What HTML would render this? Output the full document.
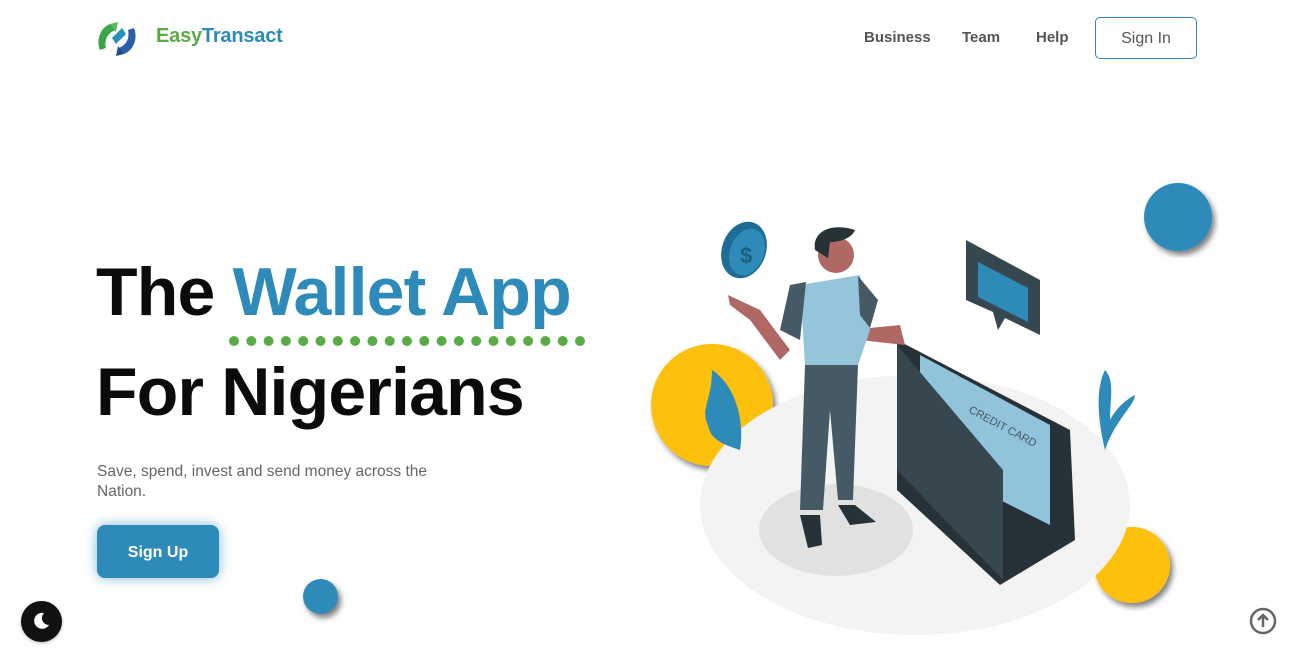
<!DOCTYPE html>
<html><head><meta charset="utf-8"><style>
*{margin:0;padding:0;box-sizing:border-box}
body{width:1301px;height:667px;overflow:hidden;background:#fff;font-family:"Liberation Sans",sans-serif;position:relative}
.abs{position:absolute}
.nav a{position:absolute;top:29px;font-size:15px;font-weight:bold;color:#555;text-decoration:none}
h1{position:absolute;left:96px;font-size:68px;font-weight:bold;color:#0b0b0b;letter-spacing:-0.8px;white-space:nowrap}
</style></head><body>
<svg class="abs" style="left:96px;top:20px" width="42" height="38" viewBox="0 0 42 38">
<path d="M4 30 C0 20 4 8 14 4 L20 10 C12 12 8 20 10 28 Z" fill="#3aa648"/>
<path d="M14 4 L22 2 L20 12 Z" fill="#5cb85c"/>
<path d="M38 8 C42 18 38 30 28 34 L22 28 C30 26 34 18 32 10 Z" fill="#2b5fa8"/>
<path d="M28 34 L20 36 L22 26 Z" fill="#1f4d94"/>
<path d="M16 18 L26 8 L30 14 L20 24 Z" fill="#2b8fbf"/>
</svg>
<div class="abs" style="left:156px;top:25px;font-size:20px;font-weight:bold;letter-spacing:-0.2px"><span style="color:#5aab46">Easy</span><span style="color:#2e8ab8">Transact</span></div>
<div class="nav"><a style="left:864px">Business</a><a style="left:962px">Team</a><a style="left:1036px">Help</a></div>
<div class="abs" style="left:1095px;top:17px;width:102px;height:42px;border:1px solid #2e8ab8;border-radius:5px;text-align:center;line-height:42px;font-size:16px;color:#555">Sign In</div>

<h1 style="top:253px">The <span style="color:#2e8ab8">Wallet App</span></h1>
<svg class="abs" style="left:226px;top:334px" width="365" height="14">
<g fill="#5aab46">
<circle cx="8" cy="7" r="5"/><circle cx="25.3" cy="7" r="5"/><circle cx="42.6" cy="7" r="5"/><circle cx="59.9" cy="7" r="5"/><circle cx="77.2" cy="7" r="5"/><circle cx="94.5" cy="7" r="5"/><circle cx="111.8" cy="7" r="5"/><circle cx="129.1" cy="7" r="5"/><circle cx="146.4" cy="7" r="5"/><circle cx="163.7" cy="7" r="5"/><circle cx="181" cy="7" r="5"/><circle cx="198.3" cy="7" r="5"/><circle cx="215.6" cy="7" r="5"/><circle cx="232.9" cy="7" r="5"/><circle cx="250.2" cy="7" r="5"/><circle cx="267.5" cy="7" r="5"/><circle cx="284.8" cy="7" r="5"/><circle cx="302.1" cy="7" r="5"/><circle cx="319.4" cy="7" r="5"/><circle cx="336.7" cy="7" r="5"/><circle cx="354" cy="7" r="5"/>
</g></svg>
<h1 style="top:353px">For Nigerians</h1>
<div class="abs" style="left:97px;top:462px;width:370px;font-size:15.5px;line-height:20px;color:#666">Save, spend, invest and send money across the Nation.</div>
<div class="abs" style="left:97px;top:525px;width:122px;height:53px;background:#2e8ab8;border-radius:8px;box-shadow:0 0 12px rgba(46,138,184,.6);color:#fff;font-weight:bold;font-size:16px;text-align:center;line-height:55px">Sign Up</div>
<div class="abs" style="left:303px;top:579px;width:35px;height:35px;border-radius:50%;background:#2e8ab8;box-shadow:3px 4px 6px rgba(0,0,0,.5)"></div>
<div class="abs" style="left:21px;top:601px;width:41px;height:41px;border-radius:50%;background:#111;box-shadow:0 1px 3px rgba(0,0,0,.3)"></div>
<svg class="abs" style="left:30px;top:610px" width="22" height="22"><path d="M14 3 A8 8 0 1 0 19 15 A7 7 0 0 1 14 3Z" fill="#fff"/></svg>
<svg class="abs" style="left:1248px;top:606px" width="30" height="30"><circle cx="15" cy="15" r="12" fill="none" stroke="#666" stroke-width="2.5"/><path d="M15 21 V10 M10 14 L15 9 L20 14" fill="none" stroke="#666" stroke-width="2.5"/></svg>

<svg class="abs" style="left:0;top:0" width="1301" height="667">
<defs><filter id="sh"><feDropShadow dx="3" dy="4" stdDeviation="3" flood-opacity=".5"/></filter></defs>
<circle cx="1178" cy="217" r="34" fill="#2e8ab8" filter="url(#sh)"/>
<circle cx="712" cy="405" r="61" fill="#fcc008" filter="url(#sh)"/>
<circle cx="1132" cy="565" r="38" fill="#fcc008" filter="url(#sh)"/>
<ellipse cx="915" cy="505" rx="215" ry="130" fill="#f3f3f3"/>
<ellipse cx="836" cy="530" rx="77" ry="46" fill="#e1e1e1"/>
<path d="M712 370 C735 385 745 420 740 450 C725 445 710 440 708 425 C700 410 712 400 712 370Z" fill="#2e8ab8"/>
<path d="M1105 370 C1095 390 1098 420 1105 450 C1115 420 1135 405 1135 395 C1125 400 1115 410 1110 420 C1110 400 1115 380 1105 370Z" fill="#2e8ab8"/>
<ellipse cx="744" cy="250" rx="22" ry="29" fill="#1f6d96" transform="rotate(20 744 250)"/>
<ellipse cx="747" cy="252" rx="17" ry="24" fill="#2e8ab8" transform="rotate(20 747 252)"/>
<text x="740" y="263" font-size="22" font-weight="bold" fill="#1f5f80">$</text>
<path d="M966 240 L1040 280 L1040 335 L1005 318 L998 330 L993 312 L966 300Z" fill="#37474f"/>
<path d="M978 262 L1028 288 L1028 322 L978 297Z" fill="#2e8ab8"/>
<path d="M897 340 L1070 430 L1075 540 L1000 585 L897 490Z" fill="#263238"/>
<path d="M920 355 L1050 425 L1050 525 L920 460Z" fill="#91c3da"/>
<text x="968" y="412" font-size="11" fill="#455a64" transform="rotate(28 968 412)">CREDIT CARD</text>
<path d="M897 345 L1003 470 L1003 580 L897 470Z" fill="#37474f"/>
<path d="M850 330 L900 325 L905 345 L860 340Z" fill="#b06864"/>
<path d="M728 295 L760 310 L790 350 L780 360 L750 320 L730 305Z" fill="#b06864"/>
<path d="M800 285 L860 275 L870 330 L858 365 L805 365Z" fill="#95c5da"/>
<path d="M790 285 L806 282 L800 340 L780 330Z" fill="#455a64"/>
<path d="M858 276 L878 300 L870 328 L860 315Z" fill="#455a64"/>
<path d="M805 365 L858 365 L853 500 L838 500 L830 410 L823 510 L800 510Z" fill="#455a64"/>
<path d="M800 515 L820 515 L822 545 L808 548Z" fill="#263238"/>
<path d="M838 505 L855 505 L876 522 L850 525Z" fill="#263238"/>
<circle cx="836" cy="255" r="18" fill="#b06864"/>
<path d="M815 250 C812 232 830 222 855 230 C852 238 840 242 830 242 L828 258Z" fill="#263238"/>
</svg>
</body></html>
